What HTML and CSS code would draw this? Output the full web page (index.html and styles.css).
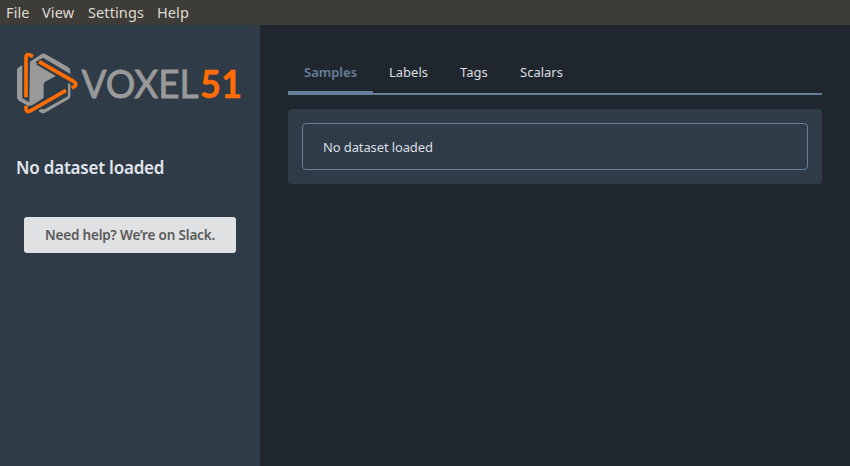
FILE: index.html
```html
<!DOCTYPE html>
<html lang="en">
<head>
<meta charset="utf-8">
<title>Voxel51</title>
<link rel="stylesheet" href="styles.css">
</head>
<body>
<nav class="menubar"><span class="m-file">File</span><span class="m-view">View</span><span class="m-settings">Settings</span><span class="m-help">Help</span></nav>
<div class="app">
  <aside class="sidebar">
    <svg class="logo" viewBox="16 52 228 62" role="img" aria-label="Voxel51">
      <g transform="translate(8 45) scale(.33333)">
        <path class="gray" d="M43 61V160L68 174V180L62 184L34 168Q27 164 27 156V76Q27 70 33 66Z"/>
        <path class="gray" d="M66 50L100 28Q106 23 113 28L180 66Q187 71 187 78V87L108 40Q105 38 100 41L82 52L148 91L112 110Q107 113 107 119V159L70 182L64 178Z"/>
        <path class="gray" d="M180 113L187 117V153Q187 159 181 163L115 201Q107 207 99 203L91 198L100 191Q105 195 111 192L177 155Q180 153 180 149Z"/>
        <path class="gap" d="M90 50L186 107"/>
        <path class="orange" d="M54 157V38Q54 26 64 29L75 35"/>
        <path class="orange" d="M93 50L198 110Q208 117 201 123L191 129"/>
        <path class="orange" d="M174 136L66 198Q54 203 54 192V182"/>
      </g>
      <text class="word" x="81.5" y="98" textLength="117" lengthAdjust="spacingAndGlyphs">VOXEL</text>
      <text class="num" x="200" y="98" textLength="42" lengthAdjust="spacingAndGlyphs">51</text>
    </svg>
    <h1 class="dataset"><span>No dataset loaded</span></h1>
    <button class="help"><span>Need help? We’re on Slack.</span></button>
  </aside>
  <main class="content">
    <div class="tabs">
      <div class="tab active">Samples</div>
      <div class="tab labels">Labels</div>
      <div class="tab tags">Tags</div>
      <div class="tab scalars">Scalars</div>
    </div>
    <section class="panel"><div class="notice">No dataset loaded</div></section>
  </main>
</div>
</body>
</html>
```

FILE: styles.css
```css
* { box-sizing: border-box; }
body {
  margin: 0;
  height: 466px;
  display: flex;
  flex-direction: column;
  overflow: hidden;
  background: #20262d;
  font-family: "Noto Sans", sans-serif;
}
.menubar {
  height: 25px;
  flex: none;
  display: flex;
  gap: 12px;
  padding-left: 6px;
  background: #3e3c38;
  color: #dfdbd2;
  font-size: 14.5px;
  letter-spacing: .1px;
  line-height: 25px;
  white-space: nowrap;
}
.m-file { width: 24px; }
.m-view { width: 34px; }
.m-settings { width: 57px; }
.app { flex: 1; display: flex; }
.sidebar {
  width: 260px;
  padding: 27px 16px 0;
  background: #2f3b47;
}
.logo { display: block; width: 228px; height: 62px; }
.gray { fill: #999; }
.orange { fill: none; stroke: #ff6d04; stroke-width: 11; }
.gap { fill: none; stroke: #2f3b47; stroke-width: 19; }
.word, .num { font-family: Lato, sans-serif; font-size: 38px; }
.word { fill: #999; stroke: #999; stroke-width: .9; }
.num { fill: #ff6d04; stroke: #ff6d04; stroke-width: .4; font-weight: 700; }
.dataset {
  margin: 39px 0 0;
  color: #e1e5ec;
  font-size: 17px;
  font-weight: 600;
  line-height: 30px;
  letter-spacing: -.22px;
  white-space: nowrap;
}
.help {
  display: block;
  width: 212px;
  height: 36px;
  margin: 34px 8px 0;
  padding: 0;
  border: 0;
  border-radius: 3px;
  background: #e0e1e2;
  color: #5a5a5a;
  font: 600 13.5px/36px "Noto Sans", sans-serif;
  letter-spacing: -.18px;
  white-space: nowrap;
}
.content { flex: 1; padding: 26px 28px 0; }
.tabs {
  display: flex;
  height: 44px;
  border-bottom: 2px solid #667f9a;
  color: #dadee4;
  font-size: 13px;
  line-height: 42px;
}
.tab { height: 44px; padding-left: 16px; white-space: nowrap; }
.active {
  width: 85px;
  border-bottom: 4px solid #667f9a;
  color: #667f9a;
  font-weight: 600;
}
.labels { width: 71px; }
.tags { width: 60px; }
.panel {
  height: 75px;
  margin-top: 14px;
  padding: 14px;
  border-radius: 4px;
  background: #2f3b47;
}
.notice {
  height: 47px;
  padding-left: 20px;
  border: 1px solid #667f9a;
  border-radius: 4px;
  color: #dadee4;
  font-size: 13px;
  letter-spacing: -.12px;
  line-height: 46px;
}
```
